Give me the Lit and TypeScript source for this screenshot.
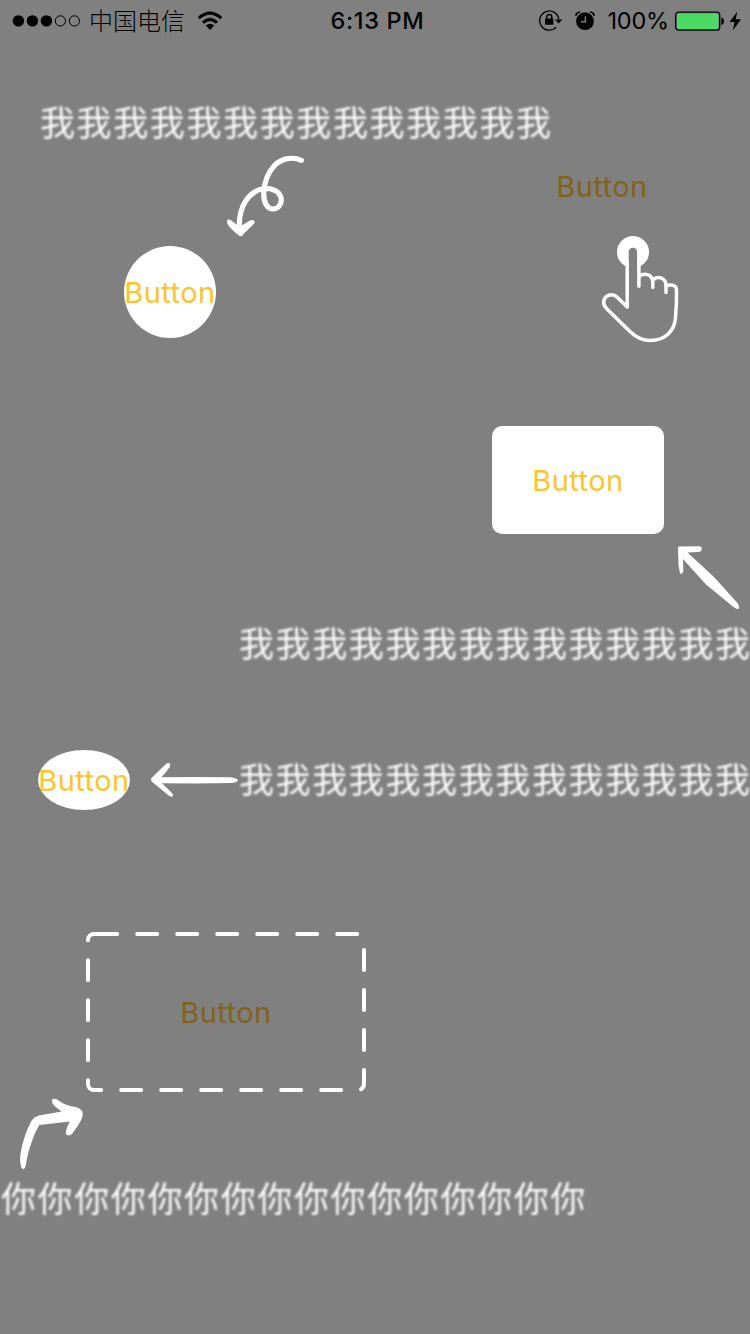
import { LitElement, html, css, svg } from "lit";
import { customElement } from "lit/decorators.js";

@customElement("status-bar")
class StatusBar extends LitElement {
  static styles = css`
    :host {
      display: grid;
      grid-template-columns: 1fr auto 1fr;
      align-items: center;
      height: 40px;
      box-sizing: border-box;
      padding: 0 9px 0 12px;
      color: #000;
      font-family: Inter, "Noto Sans CJK SC", sans-serif;
      font-size: 24px;
      line-height: 40px;
      white-space: nowrap;
    }
    svg { display: block; flex: none; }
    .left, .right { display: flex; align-items: center; }
    .right { justify-content: flex-end; }
    .carrier {
      font-family: "Noto Sans CJK SC", sans-serif;
      font-weight: 300;
      margin: -2px 12px 0 8px;
    }
    .time { font-weight: 500; font-size: 23.5px; letter-spacing: 0.65px; padding: 1px 0 0 2px; }
    .lock { margin-right: 12px; }
    .alarm { margin-right: 13px; }
    .percent { margin-right: 6px; font-size: 23.5px; letter-spacing: -0.2px; padding-top: 1px; }
    .battery { margin-right: 5px; }
    .bolt { margin-right: -1px; }
  `;

  render() {
    return html`
      <div class="left">
        <svg width="69" height="14" viewBox="0 0 69 14">
          ${[0, 1, 2, 3, 4].map((i) => svg`<circle cx=${6.4 + i * 14} cy="6.9" r=${i < 3 ? 5.7 : 5.1}
            fill=${i < 3 ? "#000" : "none"} stroke=${i < 3 ? "none" : "#000"} stroke-width="1"/>`)}
        </svg>
        <span class="carrier">中国电信</span>
        <svg width="26" height="20" viewBox="0 0 26 20" fill="none" stroke="#000" stroke-width="3">
          <path d="M1.7 7.2Q13 -3 24.3 7.2"/>
          <path d="M6 11.6Q13 5.2 20 11.6"/>
          <path d="M8.8 14.6Q13 11 17.2 14.6L13 19Z" fill="#000" stroke="none"/>
        </svg>
      </div>
      <span class="time">6:13 PM</span>
      <div class="right">
        <svg class="lock" width="24" height="22" viewBox="0 0 24 22">
          <path d="M17.2 17.2A9.6 9.6 0 1 1 19.8 9.4" fill="none" stroke="#000" stroke-width="1.3"/>
          <path d="M15.9 9.4H23.4L19.6 13.4Z"/>
          <rect x="6" y="8.4" width="8.4" height="6.4" rx=".6"/>
          <path d="M7.6 8.8V7.2A2.6 2.6 0 0 1 12.8 7.2V8.8" fill="none" stroke="#000" stroke-width="1.5"/>
        </svg>
        <svg class="alarm" width="20" height="20" viewBox="0 0 20 20">
          <circle cx="10" cy="10.2" r="8.9"/>
          <path d="M.8 4.8Q1.2 1.5 5.2 1M19.2 4.8Q18.8 1.5 14.8 1" fill="none" stroke="#000" stroke-width="1.7"/>
          <path d="M10.4 5.2V10.8H6" fill="none" stroke="#808080" stroke-width="1.5"/>
        </svg>
        <span class="percent">100%</span>
        <svg class="battery" width="49" height="20" viewBox="0 0 49 20">
          <rect x=".7" y="1.2" width="44" height="18" rx="3" fill="none" stroke="#000" stroke-width="1.3"/>
          <rect x="2" y="2.5" width="41.4" height="15.4" rx="1.8" fill="#4cd964"/>
          <path d="M46.3 6.5Q49 7.3 49 10.3T46.3 14.1Z"/>
        </svg>
        <svg class="bolt" width="13" height="20" viewBox="0 0 13 20"><path d="M8.2 .4L.7 11H5.500L3.800 19.4L12 8.2H6.800Z"/></svg>
      </div>
    `;
  }
}

@customElement("app-root")
class AppRoot extends LitElement {
  static styles = css`
    :host {
      display: block;
      position: relative;
      width: 750px;
      height: 1334px;
      overflow: hidden;
      background: #808080;
    }
    .button {
      position: absolute;
      display: flex;
      align-items: center;
      justify-content: center;
      box-sizing: border-box;
      padding-top: 2px;
      color: #fbc42d;
      font: 400 29px/36px Inter, sans-serif;
      letter-spacing: 0.45px;
      white-space: nowrap;
    }
    .dim { color: #80641a; }
    .lit { background: #fff; }
    .circle { left: 124px; top: 246px; width: 92px; height: 92px; border-radius: 50%; }
    .plain { left: 556px; top: 156px; width: 92px; height: 60px; }
    .rounded { left: 492px; top: 426px; width: 172px; height: 108px; border-radius: 10px; }
    .oval { left: 38px; top: 750px; width: 92px; height: 60px; border-radius: 50%; }
    .dashed { left: 86px; top: 932px; width: 280px; height: 160px; }
    .note {
      position: absolute;
      color: #fff;
      font: 400 35px/48px "Noto Sans CJK SC", sans-serif;
      letter-spacing: 1.62px;
      white-space: nowrap;
      opacity: 0.97;
      filter: blur(0.8px);
    }
    .first { left: 40px; top: 97px; }
    .second { left: 239px; top: 618px; }
    .third { left: 239px; top: 754px; }
    .fourth { left: 1px; top: 1173px; }
    .marks { position: absolute; left: 0; top: 0; pointer-events: none; }
    .line { fill: none; stroke: #fff; stroke-linecap: round; stroke-linejoin: round; }
    .solid { fill: #fff; }
    .gap { fill: #808080; }
  `;

  render() {
    return html`
      <status-bar></status-bar>
      <div class="button lit circle">Button</div>
      <div class="button dim plain">Button</div>
      <div class="button lit rounded">Button</div>
      <div class="button lit oval">Button</div>
      <div class="button dim dashed">Button</div>
      <div class="note first">${"我".repeat(14)}</div>
      <div class="note second">${"我".repeat(14)}</div>
      <div class="note third">${"我".repeat(14)}</div>
      <div class="note fourth">${"你".repeat(16)}</div>
      <svg class="marks" width="750" height="1334" viewBox="0 0 750 1334">
        <!-- curled arrow -->
        <path class="line" stroke-width="5.2" d="M301.3 160.3C293 156.5 282 158 274.500 165.500C267.500 173 264 183 263.700 194C263.700 203 267.5 209 273 209C278 209 281.500 204.500 281.300 199.500C280.500 192 272.500 187.500 264 188.500C249 191 238.500 206 239.3 228"/>
        <path class="solid" d="M227 220.500C228 218.500 230.500 219.500 232 221L237 225H242.500L249.500 220.800C252 219.500 255 220 254.600 222.600C253.500 225.500 246 231 243 235Q240.700 237.500 237.800 234.700C235 231.500 226 226 227 220.500Z"/>

        <!-- tapping hand -->
        <circle class="solid" cx="633" cy="252" r="16"/>
        <path class="gap" d="M628.7 270V252A4.2 4.2 0 0 1 637.1 252V270Z"/>
        <path class="line" stroke-width="3.5" d="M627.2 262V307L617 297C611.5 292 603.7 296 603.7 302.5C603.7 305.5 605 307 607 309L630 331.5C637 338.5 643 340.5 650.5 340.5C666 340.5 674.5 330 675.5 318C676.5 306 676.7 298 676.5 289.5C676.3 284 669 284.5 666.2 286"/>
        <path class="line" stroke-width="3.5" d="M638.9 262V286.3M638.9 276.5C643 272.5 652.8 273.5 652.8 282.5V287.5M653 280C657 275.5 666 277 666 286V292.5"/>

        <!-- diagonal arrow -->
        <path class="solid" d="M678 548Q677.5 546 680 546.500L699 546.3Q702 546.8 701.8 549.2Q701.3 551.6 698 552L687.500 552.500L714 577L737 602.5Q740 606.5 739 608.3Q737.5 610 733.5 607L706 584.500L683 559L683.3 571.5Q682.5 574.3 680 573.5L678.5 565Z"/>

        <!-- horizontal arrow -->
        <path class="solid" d="M151.500 778L165.5 764.5Q169.5 761.7 170.200 764.5Q170.5 767 168.3 769L161.5 777.3L195 777L230 777.2Q237 777.8 238 780.2Q237 782.5 231 783.1L195 783.5L162 783.3L171.5 792.5Q174 795 172.5 796.5Q170.5 797 168 795L152 781.8Q150.300 779.8 151.500 778Z"/>

        <!-- bent arrow -->
        <path class="solid" d="M23 1169Q20.6 1168.5 20.2 1161C20 1148 27 1128 32 1120Q34.5 1116.5 39 1115.5L61.7 1111.5L55 1106.5Q51.5 1103 52 1100Q53.5 1097.6 57 1099.5C62 1103 67 1106 76 1107Q84 1109.5 82.6 1116C81 1122 75.5 1129 72 1134Q69 1136.500 66.2 1134.5Q64.5 1132 69.7 1121.5L39.3 1125C34.5 1133 29 1147 26 1164Q25.5 1169 23 1169Z"/>

        <!-- dashed frame -->
        <path class="line" stroke-width="4" stroke-dasharray="20 20" d="M97.2 934H358A6 6 0 0 1 364 940V1084A6 6 0 0 1 358 1090H94A6 6 0 0 1 88 1084V940A6 6 0 0 1 94 934H97.2"/>
      </svg>
    `;
  }
}
